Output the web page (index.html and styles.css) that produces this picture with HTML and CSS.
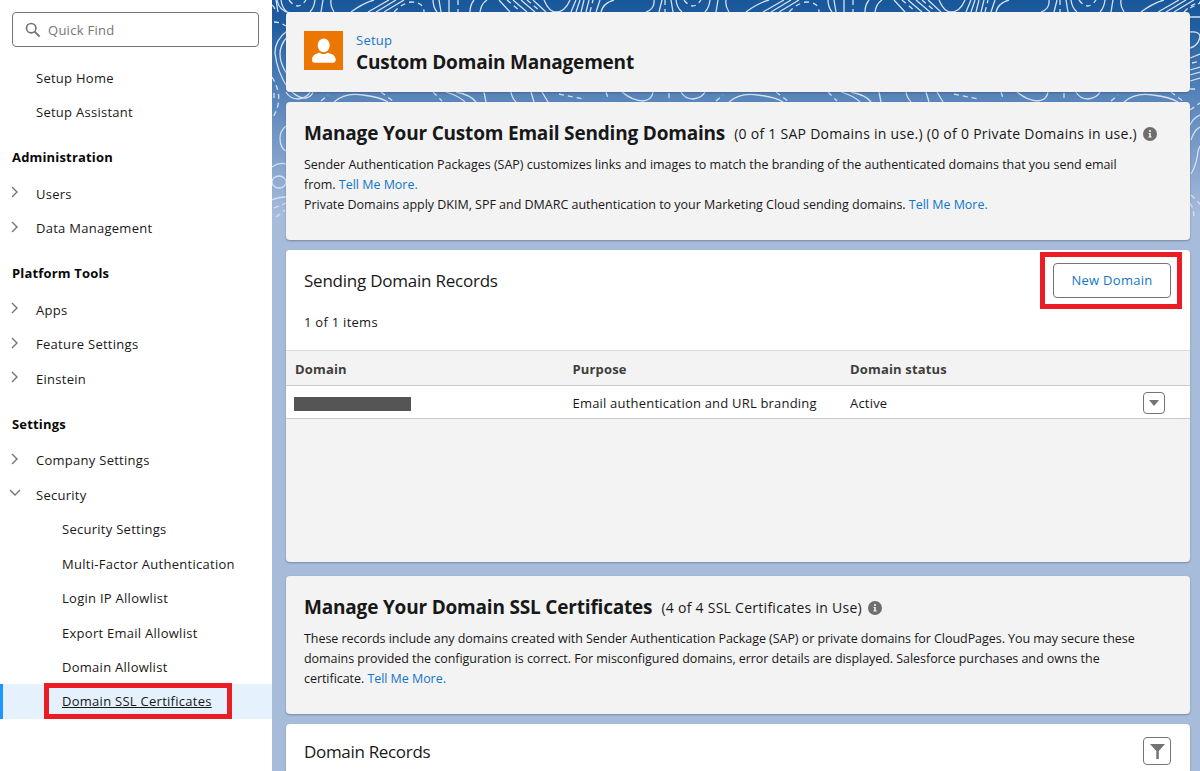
FILE: index.html
```html
<!DOCTYPE html>
<html lang="en">
<head>
  <meta charset="UTF-8" />
  <meta name="viewport" content="width=device-width, initial-scale=1.0"/>
  <title>Custom Domain Management</title>
  <link rel="stylesheet" href="styles.css">
</head>
<body>
  <svg class="defs" width="0" height="0">
    <symbol id="chevron" viewBox="0 0 8 12"><path d="M1 1l5 5-5 5" fill="none" stroke="#747474" stroke-width="1.4"/></symbol>
    <symbol id="info" viewBox="0 0 14 14">
      <circle cx="7" cy="7" r="7" fill="#706e6b"/>
      <circle cx="7" cy="4" r="1.1" fill="#f3f3f3"/>
      <path d="M5.6 6h2.2v3.5h.9v1H5.4v-1h.8V7h-.6z" fill="#f3f3f3"/>
    </symbol>
  </svg>

  <nav class="sidebar">
    <div class="search">
      <svg width="16" height="16" viewBox="0 0 16 16"><circle cx="6.2" cy="6.2" r="4.7" fill="none" stroke="#747474" stroke-width="1.7"/><path d="M9.6 9.6l5 5" stroke="#747474" stroke-width="2"/></svg>
      <span>Quick Find</span>
    </div>
    <ul class="menu">
      <li class="item">Setup Home</li>
      <li class="item">Setup Assistant</li>
      <li class="heading">Administration</li>
      <li class="item"><svg class="chevron"><use href="#chevron"/></svg>Users</li>
      <li class="item"><svg class="chevron"><use href="#chevron"/></svg>Data Management</li>
      <li class="heading">Platform Tools</li>
      <li class="item"><svg class="chevron"><use href="#chevron"/></svg>Apps</li>
      <li class="item"><svg class="chevron"><use href="#chevron"/></svg>Feature Settings</li>
      <li class="item"><svg class="chevron"><use href="#chevron"/></svg>Einstein</li>
      <li class="heading">Settings</li>
      <li class="item"><svg class="chevron"><use href="#chevron"/></svg>Company Settings</li>
      <li class="item"><svg class="chevron open"><use href="#chevron"/></svg>Security</li>
      <li class="item sub">Security Settings</li>
      <li class="item sub">Multi-Factor Authentication</li>
      <li class="item sub">Login IP Allowlist</li>
      <li class="item sub">Export Email Allowlist</li>
      <li class="item sub">Domain Allowlist</li>
      <li class="item sub active"><span>Domain SSL Certificates</span><i class="marker"></i></li>
    </ul>
  </nav>

  <main class="content">
    <svg class="contours" width="928" height="240" viewBox="272 0 928 240">
      <defs>
        <g id="tile">
          <path d="M746 12Q758 3 769 0M763 12L784 0M771 12L791 0M779 12L799 0M828 0Q828 7 832 12M834 0L836 12M844 0V12M865 12Q865 5 869 0M875 12Q876 4 882 0M894 0L905 12M908 0L922 12M916 0L930 12M928 0L941 12M939 0Q944 12 951 12Q960 12 965 0M966 12L971 0M971 12L975 0M976 12L979 0M981 12L984 0M991 12L995 0M996 12Q998 3 1009 0M1041 12Q1050 9 1049 0M1054 12L1057 0M1066 0L1068 12M1071 0Q1072 8 1077 12M1105 0Q1104 8 1100 12M1111 12L1113 0M1121 0Q1120 6 1124 12"/>
          <path class="dash" d="M789 12Q796 4 806 2Q819 2 819 12M853 0V12M902 0L916 12M922 0L936 12M985 12L988 0M1060 0V12M1079 0Q1088 12 1096 0"/>
          <path d="M729 102Q740 92 758 95Q775 97 783 102M841 92Q854 96 860 102M851 92Q866 95 871 102M879 92L881 102M906 92Q907 98 911 102M926 92L929 102M937 92L943 102M1017 92Q1028 101 1038 101Q1047 100 1048 92M1076 92Q1080 99 1088 99Q1097 98 1100 92"/>
          <path class="dash" d="M776 92L788 101M828 92L837 101M954 94L978 99M1001 92L1003 98M1064 93V99M1111 101L1118 95"/>
        </g>
      </defs>
      <use href="#tile" x="-790"/>
      <use href="#tile" x="-395"/>
      <use href="#tile"/>
      <use href="#tile" x="395"/>
      <path d="M277 0Q279 11 290 13M287 31Q275 40 275 53Q277 72 288 88Q298 99 306 98Q311 97 313 92M287 37Q273 53 287 74M286 126Q280 131 280 138Q280 148 286 151M272 167Q279 162 286 164M272 200Q278 197 286 197"/>
      <ellipse cx="279" cy="182" rx="7" ry="6"/>
      <path class="dash" d="M272 5Q275 7 276 13M274 22Q280 22 286 26M272 77Q285 98 273 117M274 208L286 203M276 217L285 210"/>
      <path d="M1190 17H1200M1190 32Q1200 31 1200 37Q1198 46 1190 48M1190 58L1200 54M1190 70L1200 67M1190 75L1200 72M1190 81L1200 78M1190 125Q1193 118 1200 115M1191 140Q1194 130 1200 127M1191 174Q1197 164 1198 151L1200 146"/>
      <path class="dash" d="M1190 8L1200 3M1192 63L1200 61M1190 89H1196M1190 110L1200 103M1191 195L1200 204M1190 203Q1194 209 1194 218"/>
    </svg>

    <header class="card page-header">
      <svg width="39" height="39" viewBox="0 0 39 39"><path fill="#ec7700" d="M0 0h39v39H0z"/><ellipse cx="19.700" cy="14.300" rx="6" ry="6.900" fill="#fff"/><path d="M8 28.700c0-4 3-5.800 6.500-6.800 1-.3 1.500 0 2 .3q3 1.800 6.200 0c.5-.3 1.100-.6 2-.3 3.600 1 7 2.800 7 6.800 0 2-1 3-2.600 3H10.500C9 31.700 8 30.700 8 28.700z" fill="#fff"/></svg>
      <div>
        <a class="crumb">Setup</a>
        <h1>Custom Domain Management</h1>
      </div>
    </header>

    <section class="card intro">
      <div class="title-row">
        <h2 class="title">Manage Your Custom Email Sending Domains</h2>
        <span class="usage">(0 of 1 SAP Domains in use.) (0 of 0 Private Domains in use.)</span>
        <svg class="info"><use href="#info"/></svg>
      </div>
      <p>Sender Authentication Packages (SAP) customizes links and images to match the branding of the authenticated domains that you send email<br>from. <a>Tell Me More.</a><br>Private Domains apply DKIM, SPF and DMARC authentication to your Marketing Cloud sending domains. <a>Tell Me More.</a></p>
    </section>

    <section class="card records">
      <div class="records-head">
        <h3>Sending Domain Records</h3>
        <div class="new-domain">
          <button class="button">New Domain</button>
          <i class="callout"></i>
        </div>
      </div>
      <div class="count">1 of 1 items</div>
      <div class="row head">
        <span>Domain</span><span>Purpose</span><span>Domain status</span>
      </div>
      <div class="row">
        <span class="redacted"></span><span>Email authentication and URL branding</span><span>Active</span>
        <div class="row-menu"><svg width="10" height="6" viewBox="0 0 10 6"><path d="M0 0h10L5 6z" fill="#747474"/></svg></div>
      </div>
    </section>

    <section class="card intro ssl">
      <div class="title-row">
        <h2 class="title">Manage Your Domain SSL Certificates</h2>
        <span class="usage">(4 of 4 SSL Certificates in Use)</span>
        <svg class="info"><use href="#info"/></svg>
      </div>
      <p>These records include any domains created with Sender Authentication Package (SAP) or private domains for CloudPages. You may secure these<br>domains provided the configuration is correct. For misconfigured domains, error details are displayed. Salesforce purchases and owns the<br>certificate. <a>Tell Me More.</a></p>
    </section>

    <section class="card domain-records">
      <h3>Domain Records</h3>
      <div class="filter"><svg width="15" height="15" viewBox="0 0 15 15"><path d="M0 0h15L8.800 7v8H6.300V7z" fill="#747474"/></svg></div>
    </section>
  </main>
</body>
</html>
```
FILE: styles.css
```css
* {
  box-sizing: border-box;
}
body {
  margin: 0;
  height: 771px;
  overflow: hidden;
  display: flex;
  font-family: "Open Sans", "Noto Sans", sans-serif;
  font-size: 13px;
  letter-spacing: 0.27px;
  color: #181818;
  background: #fff;
  white-space: nowrap;
}
h1, h2, h3, p, ul {
  margin: 0;
  padding: 0;
}
a {
  color: #1276cb;
}
.defs {
  position: absolute;
}

/* sidebar */
.sidebar {
  width: 272px;
  padding-top: 12px;
  flex: none;
}
.search {
  width: 247px;
  height: 35px;
  margin: 0 0 13.3px 12px;
  padding-left: 12px;
  display: flex;
  align-items: center;
  gap: 7px;
  border: 1px solid #747474;
  border-radius: 4px;
  color: #747474;
}
.menu {
  list-style: none;
}
.item {
  height: 34.7px;
  padding-left: 36px;
  display: flex;
  align-items: center;
  position: relative;
}
.heading {
  height: 46.6px;
  padding: 8px 0 0 12px;
  display: flex;
  align-items: center;
  font-weight: 700;
  letter-spacing: 0.17px;
  color: #080808;
}
.chevron {
  width: 8px;
  height: 12px;
  margin: -3px 17px 0 -25px;
}
.chevron.open {
  transform: rotate(90deg);
}
.sub {
  height: 34.4px;
  padding-left: 62px;
}
.active {
  background: #e5f2fd;
  border-left: 3px solid #1b96ff;
  padding-left: 59px;
  text-decoration: underline;
}
.marker {
  position: absolute;
  left: 41px;
  top: -1px;
  width: 188px;
  height: 36px;
  border: 5px solid #ec1c24;
}

/* content */
.content {
  flex: 1;
  position: relative;
  padding: 12px 10px 0 14px;
  display: flex;
  flex-direction: column;
  gap: 10px;
  background: linear-gradient(#18579a 0, #215e9f 25px, #5a86bb 100px, #a7bbdb 215px, #a7bbdb 100%);
}
.contours {
  position: absolute;
  left: 0;
  top: 0;
  fill: none;
  stroke: #d3e2f3;
  stroke-width: 1.3;
}
.dash {
  stroke-dasharray: 5 4;
}
.card {
  position: relative;
  flex: none;
  background: #f3f3f3;
  border-radius: 4px;
  box-shadow: 0 1px 2px rgba(60, 70, 90, 0.45);
}
.page-header {
  height: 80px;
  padding: 19px 18px;
  display: flex;
  gap: 13px;
}
.crumb {
  display: block;
  line-height: 18px;
}
h1 {
  font-size: 19px;
  line-height: 26px;
  letter-spacing: -0.2px;
}
.intro {
  height: 138px;
  padding: 16px 18px;
}
.title-row {
  display: flex;
  align-items: center;
  height: 30px;
}
.title {
  font-size: 19px;
  letter-spacing: -0.19px;
}
.usage {
  margin: 1px 0 0 9px;
  font-size: 14px;
}
.info {
  width: 14px;
  height: 14px;
  margin: 2px 0 0 6px;
}
.intro p {
  margin-top: 7px;
  font-size: 12.5px;
  line-height: 20px;
  letter-spacing: -0.02px;
}
.ssl p {
  letter-spacing: -0.05px;
}
.records {
  height: 312px;
  margin-bottom: 4px;
}
.records-head {
  height: 62px;
  padding: 0 19px 2px 18px;
  display: flex;
  align-items: center;
  justify-content: space-between;
  background: #fff;
  border-radius: 4px 4px 0 0;
}
h3 {
  font-size: 17px;
  font-weight: 400;
  letter-spacing: -0.23px;
}
.domain-records h3 {
  line-height: 29px;
  letter-spacing: -0.32px;
}
.new-domain {
  position: relative;
}
.button {
  display: block;
  width: 118px;
  height: 35px;
  padding: 0;
  font: inherit;
  letter-spacing: inherit;
  color: #1276cb;
  background: #fff;
  border: 1px solid #747474;
  border-radius: 4px;
}
.callout {
  position: absolute;
  left: -13px;
  top: -11px;
  width: 142px;
  height: 57px;
  border: 5px solid #ec1c24;
}
.count {
  height: 38px;
  padding: 1px 18px;
  background: #fff;
}
.row {
  height: 33px;
  padding: 1px 25px 0 9px;
  display: grid;
  grid-template-columns: 277.5px 277.5px 1fr auto;
  align-items: center;
  letter-spacing: 0.2px;
  background: #fff;
  border-bottom: 1px solid #c9c9c9;
}
.row.head {
  height: 36px;
  font-weight: 700;
  letter-spacing: 0.16px;
  color: #3e3e3c;
  background: #f3f3f3;
  border-top: 1px solid #dddbda;
}
.redacted {
  width: 117px;
  height: 14px;
  margin: 2px 0 0 -1px;
  background: #555;
}
.row-menu {
  width: 22px;
  height: 22px;
  display: flex;
  align-items: center;
  justify-content: center;
  border: 1px solid #747474;
  border-radius: 4px;
}
.domain-records {
  height: 47px;
  padding: 13px 19px 0 18px;
  display: flex;
  justify-content: space-between;
  align-items: flex-start;
  background: #fff;
  border-radius: 4px 4px 0 0;
}
.filter {
  width: 28px;
  height: 28px;
  display: flex;
  align-items: center;
  justify-content: center;
  border: 1px solid #747474;
  border-radius: 4px;
}
```
